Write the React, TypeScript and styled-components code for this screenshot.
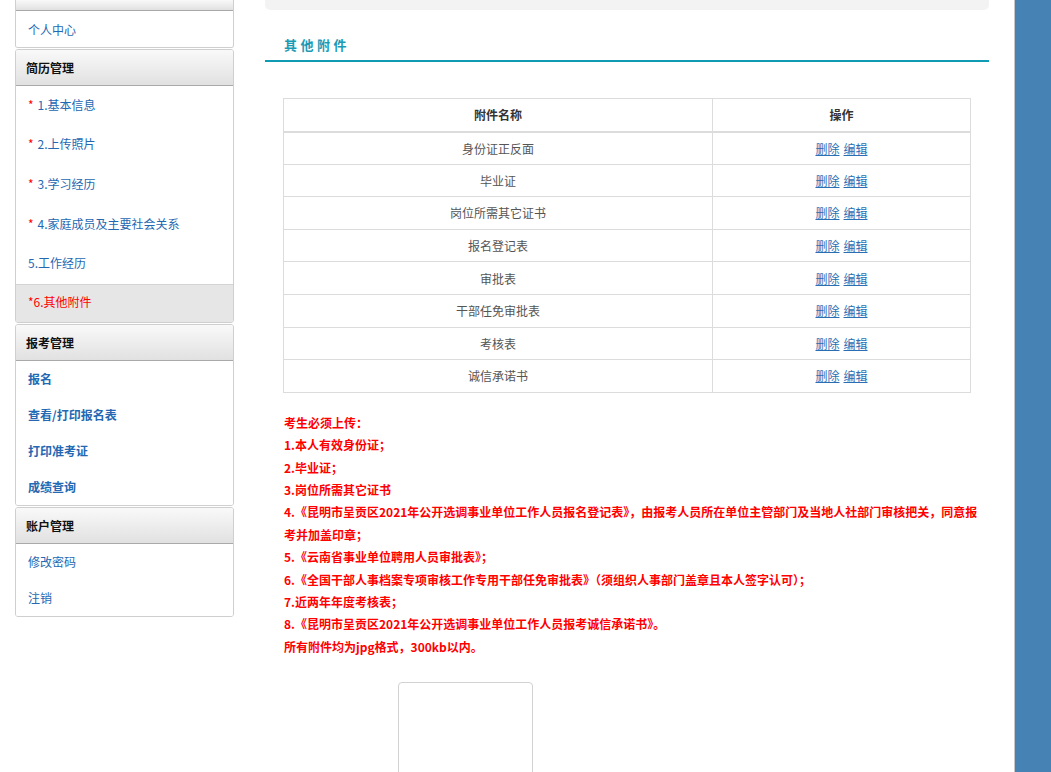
import React from "react";
import styled, { createGlobalStyle } from "styled-components";

const GlobalStyle = createGlobalStyle`
  html, body, #root {
    margin: 0;
    padding: 0;
    height: 100%;
  }
  * {
    box-sizing: border-box;
  }
  body {
    font-family: "Noto Sans CJK SC", "Liberation Sans", sans-serif;
    font-size: 12px;
    color: #333;
    background: #fff;
    overflow: hidden;
  }
`;

const Page = styled.div`
  display: flex;
  height: 100%;
`;

const SideBar = styled.div`
  width: 219px;
  margin-left: 15px;
  flex-shrink: 0;
`;

const Panel = styled.div<{ $cut?: boolean }>`
  border: 1px solid #cfcfcf;
  border-top-width: ${(p) => (p.$cut ? "0" : "1px")};
  border-radius: ${(p) => (p.$cut ? "0 0 3px 3px" : "3px")};
  margin-bottom: 1px;
  background: #fff;
  overflow: hidden;
`;

const PanelHead = styled.div<{ $short?: boolean }>`
  height: ${(p) => (p.$short ? "11px" : "36px")};
  line-height: 35px;
  padding-left: 10px;
  font-weight: bold;
  color: #111;
  background: linear-gradient(#f9f9f9, #e1e1e1);
  border-bottom: 1px solid #a9a9a9;
`;

const MenuItem = styled.div<{ $h: number; $active?: boolean; $bold?: boolean }>`
  height: ${(p) => p.$h}px;
  display: flex;
  align-items: center;
  padding: 0 0 ${(p) => (p.$h > 37 ? "3px" : "0")} 12px;
  color: ${(p) => (p.$active ? "#ff0000" : "#2468b2")};
  font-weight: ${(p) => (p.$bold ? "bold" : "normal")};
  background: ${(p) => (p.$active ? "#e6e6e6" : "#fff")};
  border-top: ${(p) => (p.$active ? "1px solid #d4d4d4" : "none")};
`;

const Star = styled.span`
  color: #ff0000;
  margin-right: 4px;
`;

const Main = styled.div`
  width: 724px;
  margin-left: 31px;
  flex-shrink: 0;
`;

const TopBar = styled.div`
  height: 10px;
  background: #f3f3f3;
  border-radius: 0 0 5px 5px;
`;

const Title = styled.div`
  height: 52px;
  padding: 20px 0 0 19px;
  line-height: 30px;
  font-size: 13px;
  font-weight: bold;
  letter-spacing: 3.5px;
  color: #1c9ab5;
  border-bottom: 2px solid #0f9bb2;
`;

const Body = styled.div`
  padding: 36px 0 0 18px;
`;

const Table = styled.table`
  width: 688px;
  border-collapse: collapse;
  table-layout: fixed;
`;

const Th = styled.th<{ $w?: string }>`
  width: ${(p) => p.$w || "auto"};
  height: 33px;
  border: 1px solid #dcdcdc;
  border-bottom: 2px solid #dcdcdc;
  font-weight: bold;
  color: #333;
  padding: 0;
`;

const Td = styled.td`
  height: 32.6px;
  border: 1px solid #dcdcdc;
  text-align: center;
  color: #555;
  padding: 0;
`;

const Link = styled.a`
  color: #2a6fb4;
  text-decoration: underline;
  cursor: pointer;
  margin: 0 2px;
`;

const Notes = styled.div`
  margin-top: 19px;
  padding-left: 1px;
  width: 706px;
  color: #ff0000;
  font-weight: bold;
  line-height: 22.4px;
`;

const PhotoBox = styled.div`
  width: 135px;
  height: 160px;
  margin: 24px 0 0 115px;
  border: 1px solid #d2d2d2;
  border-radius: 4px;
`;

const Spacer = styled.div`
  flex: 1;
`;

const RightBar = styled.div`
  width: 37px;
  flex-shrink: 0;
  background: #4682b4;
  border-left: 1px solid #c8c8c8;
`;

const resumeItems = [
  { text: "1.基本信息", star: true },
  { text: "2.上传照片", star: true },
  { text: "3.学习经历", star: true },
  { text: "4.家庭成员及主要社会关系", star: true },
  { text: "5.工作经历", star: false },
];

const files = [
  "身份证正反面",
  "毕业证",
  "岗位所需其它证书",
  "报名登记表",
  "审批表",
  "干部任免审批表",
  "考核表",
  "诚信承诺书",
];

export default function App() {
  return (
    <>
      <GlobalStyle />
      <Page>
        <SideBar>
          <Panel $cut>
            <PanelHead $short />
            <MenuItem $h={36}>个人中心</MenuItem>
          </Panel>
          <Panel>
            <PanelHead>简历管理</PanelHead>
            {resumeItems.map((it) => (
              <MenuItem key={it.text} $h={39.6}>
                {it.star && <Star>*</Star>}
                {it.text}
              </MenuItem>
            ))}
            <MenuItem $h={38} $active>
              *6.其他附件
            </MenuItem>
          </Panel>
          <Panel>
            <PanelHead>报考管理</PanelHead>
            {["报名", "查看/打印报名表", "打印准考证", "成绩查询"].map((t) => (
              <MenuItem key={t} $h={36} $bold>
                {t}
              </MenuItem>
            ))}
          </Panel>
          <Panel>
            <PanelHead>账户管理</PanelHead>
            {["修改密码", "注销"].map((t) => (
              <MenuItem key={t} $h={36}>
                {t}
              </MenuItem>
            ))}
          </Panel>
        </SideBar>

        <Main>
          <TopBar />
          <Title>其他附件</Title>
          <Body>
            <Table>
              <thead>
                <tr>
                  <Th $w="429px">附件名称</Th>
                  <Th>操作</Th>
                </tr>
              </thead>
              <tbody>
                {files.map((f) => (
                  <tr key={f}>
                    <Td>{f}</Td>
                    <Td>
                      <Link>删除</Link>
                      <Link>编辑</Link>
                    </Td>
                  </tr>
                ))}
              </tbody>
            </Table>
            <Notes>
              考生必须上传：
              <br />
              1.本人有效身份证；
              <br />
              2.毕业证；
              <br />
              3.岗位所需其它证书
              <br />
              4.《昆明市呈贡区2021年公开选调事业单位工作人员报名登记表》，由报考人员所在单位主管部门及当地人社部门审核把关，同意报
              <br />
              考并加盖印章；
              <br />
              5.《云南省事业单位聘用人员审批表》；
              <br />
              6.《全国干部人事档案专项审核工作专用干部任免审批表》（须组织人事部门盖章且本人签字认可）；
              <br />
              7.近两年年度考核表；
              <br />
              8.《昆明市呈贡区2021年公开选调事业单位工作人员报考诚信承诺书》。
              <br />
              所有附件均为jpg格式，300kb以内。
            </Notes>
            <PhotoBox />
          </Body>
        </Main>
        <Spacer />
        <RightBar />
      </Page>
    </>
  );
}
